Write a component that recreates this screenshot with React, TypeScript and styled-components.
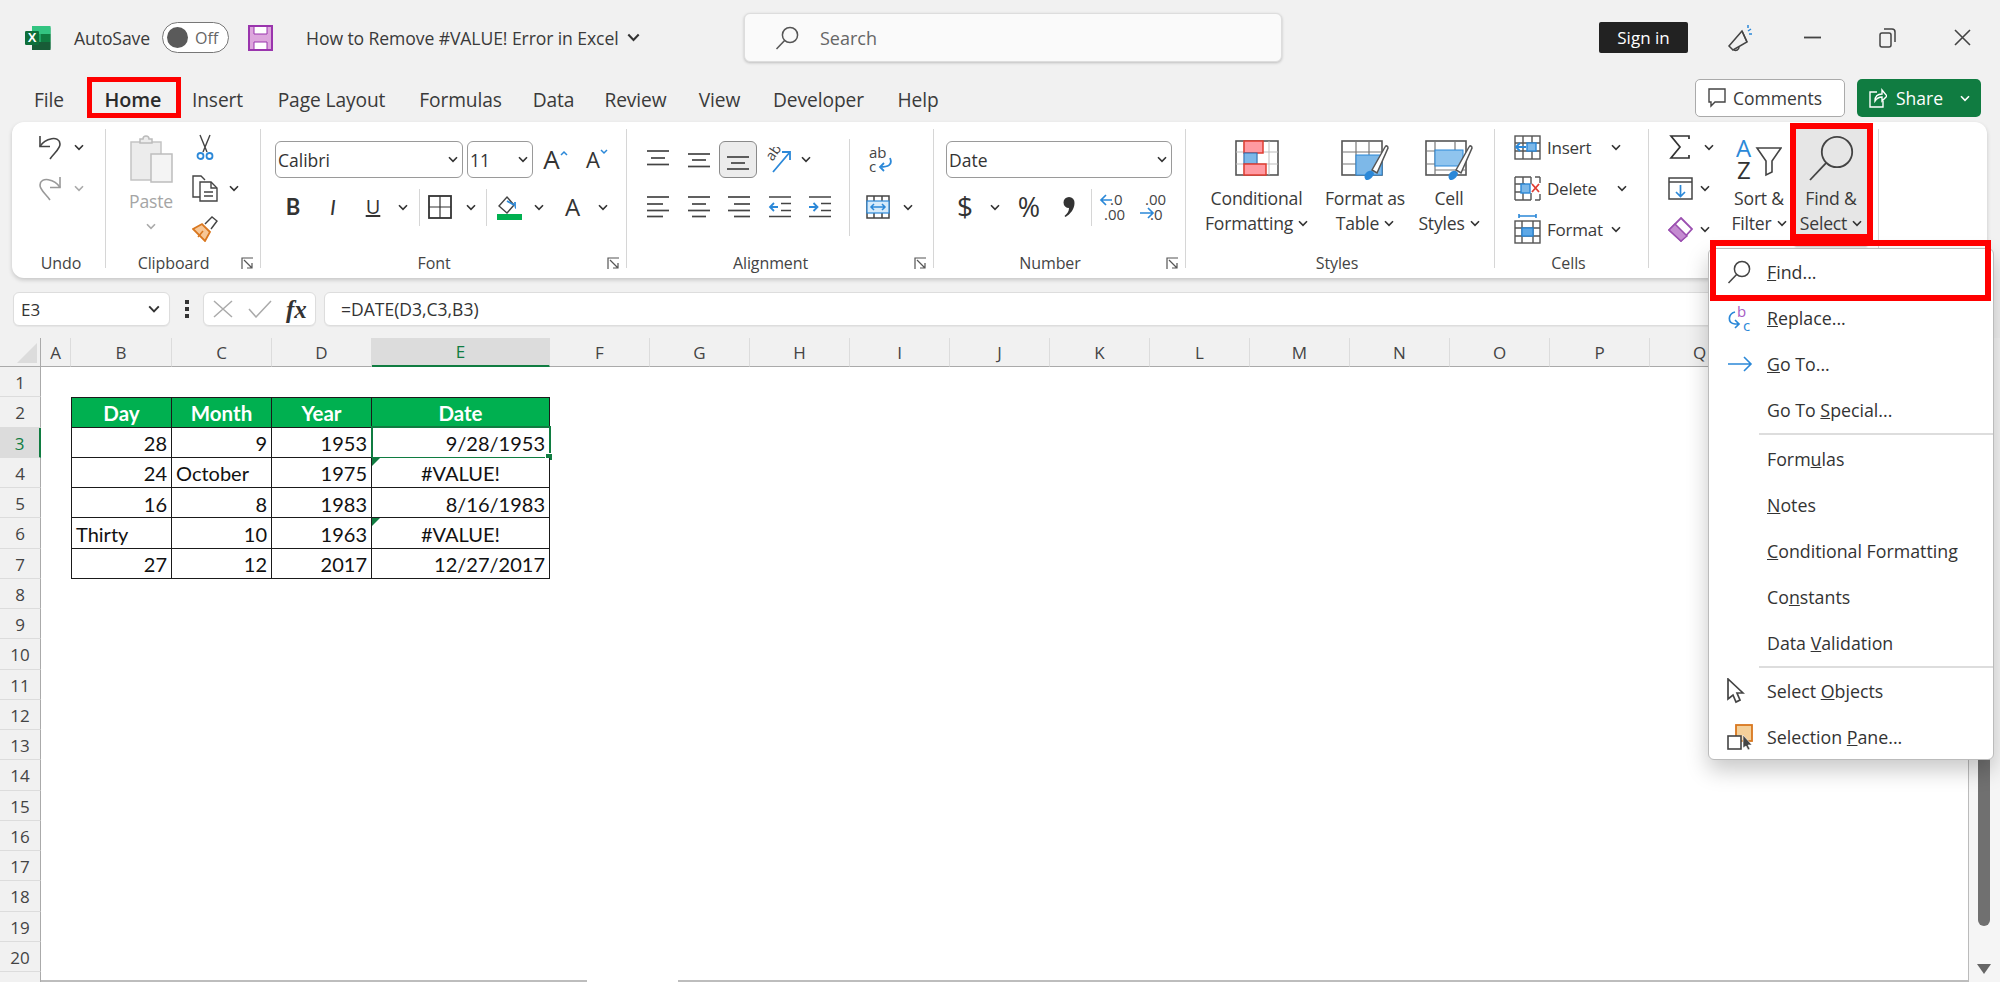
import React from "react";
import styled, { createGlobalStyle } from "styled-components";

const Global = createGlobalStyle`
  html, body { margin: 0; padding: 0; background: #fff; }
  * { box-sizing: border-box; }
  svg { display: block; flex: none; }
`;
const UI = `"Open Sans", "Noto Sans", sans-serif`;
const CELL = `Lato, "Liberation Sans", sans-serif`;

const Page = styled.div`
  position: relative; width: 2000px; height: 982px; overflow: hidden;
  background: #f1f1f1; color: #3a3a3a; font-family: ${UI};
  display: flex; flex-direction: column;
`;
const TitleBar = styled.div`height: 75px; display: flex; align-items: center; padding: 0 0 0 25px; flex: none;`;
const TitleText = styled.span<{ $l?: number }>`font-size: 17.6px; margin-left: ${p => p.$l ?? 0}px; letter-spacing: -0.1px; white-space: nowrap;`;
const Toggle = styled.div`
  margin-left: 12px; width: 67px; height: 31px; border: 1.5px solid #777; border-radius: 16px; background: #fff;
  display: flex; align-items: center; padding-left: 4px; gap: 7px; font-size: 16px; color: #666;
`;
const Knob = styled.span`width: 21px; height: 21px; border-radius: 50%; background: #5a5a5a;`;
const SearchBox = styled.div`
  position: absolute; left: 744px; top: 13px; width: 538px; height: 49px; background: #fafafa; border: 1px solid #ddd;
  border-radius: 6px; box-shadow: 0 1px 3px rgba(0,0,0,.22); display: flex; align-items: center; padding-left: 30px; gap: 21px;
  font-size: 18px; color: #666;
`;
const TitleRight = styled.div`margin-left: auto; display: flex; align-items: center; padding-right: 18px;`;
const SignIn = styled.div`
  width: 89px; height: 31px; background: #222; color: #fff; border-radius: 2px; font-size: 17px;
  display: flex; align-items: center; justify-content: center;
`;
const WinSlot = styled.div<{ $w: number }>`width: ${p => p.$w}px; display: flex; justify-content: center;`;

const TabRow = styled.div`height: 47px; display: flex; padding-left: 10px; flex: none;`;
const Tab = styled.div<{ $w: number; $on?: boolean }>`
  position: relative; width: ${p => p.$w}px; height: 47px; display: flex; align-items: center; justify-content: center; padding-top: 2px;
  font-size: ${p => (p.$on ? 19.8 : 19.2)}px; font-weight: ${p => (p.$on ? 600 : 400)}; color: ${p => (p.$on ? "#2b2b2b" : "#3a3a3a")};
  letter-spacing: -0.1px;
`;
const RedMark = styled.div<{ $l: number; $t: number; $w: number; $h: number; $b: number }>`
  position: absolute; left: ${p => p.$l}px; top: ${p => p.$t}px; width: ${p => p.$w}px; height: ${p => p.$h}px;
  border: ${p => p.$b}px solid #ff0000; pointer-events: none;
`;
const TabActions = styled.div`margin-left: auto; display: flex; gap: 12px; padding: 4px 19px 0 0;`;
const CommentsBtn = styled.div`
  width: 150px; height: 38px; background: #fff; border: 1px solid #aaa; border-radius: 5px; font-size: 17.5px;
  display: flex; align-items: center; padding-left: 12px; gap: 7px;
`;
const ShareBtn = styled.div`
  width: 124px; height: 38px; background: #107c41; color: #fff; border-radius: 5px; font-size: 17.5px;
  display: flex; align-items: center; padding-left: 12px; gap: 9px;
`;

const Ribbon = styled.div`
  margin-left: 12px; width: 1975px; height: 156px; background: #fff; border-radius: 12px;
  box-shadow: 0 2px 4px rgba(0,0,0,.18); display: flex; padding-top: 7px; flex: none;
`;
const Group = styled.div<{ $w: number; $plain?: boolean }>`
  width: ${p => p.$w}px; height: 139px; display: flex; flex-direction: column; position: relative; flex: none;
  border-right: ${p => (p.$plain ? "none" : "1px solid #d6d6d6")};
`;
const Body = styled.div<{ $col?: boolean; $pt?: number; $pl?: number; $gap?: number }>`
  flex: 1; display: flex; flex-direction: ${p => (p.$col ? "column" : "row")};
  padding: ${p => p.$pt ?? 0}px 0 0 ${p => p.$pl ?? 0}px; gap: ${p => p.$gap ?? 0}px; min-height: 0;
`;
const Foot = styled.div<{ $pl?: number }>`height: 22px; display: flex; align-items: center; margin-bottom: -6px; padding: 0 6px 0 ${p => p.$pl ?? 0}px; font-size: 16px; color: #444;`;
const FootLabel = styled.div`flex: 1; text-align: center; letter-spacing: -0.1px;`;
const Row = styled.div<{ $h?: number; $l?: number }>`
  display: flex; align-items: center; height: ${p => p.$h ?? 36}px; margin-left: ${p => p.$l ?? 0}px; flex: none;
`;
const Stack = styled.div<{ $w: number; $gap?: number }>`
  width: ${p => p.$w}px; display: flex; flex-direction: column; gap: ${p => p.$gap ?? 5}px; flex: none;
`;
const Slot = styled.div<{ $w: number; $on?: boolean; $h?: number; $ml?: number }>`
  width: ${p => p.$w}px; height: ${p => p.$h ? `${p.$h}px` : "auto"}; display: flex; align-items: center; justify-content: center; flex: none;
  margin-left: ${p => p.$ml ?? 0}px;
  ${p => p.$on ? "background:#ececec;border:1px solid #8a8a8a;border-radius:6px;" : ""}
`;
const VSep = styled.div<{ $h: number; $ml?: number; $mr?: number; $mt?: number }>`
  width: 1px; height: ${p => p.$h}px; background: #d6d6d6; margin: ${p => p.$mt ?? 0}px ${p => p.$mr ?? 0}px 0 ${p => p.$ml ?? 0}px; flex: none;
`;
const Combo = styled.div<{ $w: number; $ml?: number }>`
  width: ${p => p.$w}px; height: 37px; margin-left: ${p => p.$ml ?? 0}px; border: 1px solid #9a9a9a; border-radius: 6px; background: #fff;
  display: flex; align-items: center; justify-content: space-between; padding: 0 4px 0 2px; font-size: 17.5px; color: #333; flex: none;
`;
const BigBtn = styled.div<{ $w: number; $grey?: boolean }>`
  position: relative; width: ${p => p.$w}px; display: flex; flex-direction: column; align-items: center; flex: none;
  font-size: 17.6px; line-height: 25px; color: ${p => (p.$grey ? "#a5a5a5" : "#3a3a3a")}; letter-spacing: -0.2px;
`;
const IconBox = styled.div<{ $h: number }>`height: ${p => p.$h}px; display: flex; align-items: flex-end; justify-content: center; flex: none;`;
const BtnText = styled.span<{ $t: number }>`margin-top: ${p => p.$t}px; white-space: nowrap;`;
const BtnLine = styled.div`display: flex; align-items: center; gap: 5px; white-space: nowrap;`;
const FindWrap = styled.div`
  position: relative; width: 72px; height: 116px; background: #e6e6e6; box-shadow: 0 2px 2px rgba(0,0,0,.25);
  display: flex; flex-direction: column; align-items: center;
  font-size: 17.6px; line-height: 25px; letter-spacing: -0.2px; flex: none;
`;
const CellRow = styled.div`display: flex; align-items: center; height: 36px; font-size: 17px; letter-spacing: -0.25px;`;
const CellLabel = styled.span<{ $w: number }>`width: ${p => p.$w}px; margin-left: 6px; flex: none;`;
const GlyphB = styled.span<{ $b?: boolean; $i?: boolean; $u?: boolean; $s?: number }>`
  font-size: ${p => p.$s ?? 19}px; font-weight: ${p => (p.$b ? 700 : 400)}; font-style: ${p => (p.$i ? "italic" : "normal")};
  text-decoration: ${p => (p.$u ? "underline" : "none")}; line-height: 1.2; color: #333; font-family: ${p => (p.$i || p.$b ? CELL : UI)};
`;
const Caret = styled.svg<{ $ml?: number }>`margin-top: -14px; margin-left: ${p => p.$ml ?? 0}px;`;

const FormulaBar = styled.div`height: 60px; padding: 14px 12px 0 13px; display: flex; flex: none; align-items: flex-start;`;
const NameBox = styled.div`
  width: 157px; height: 34px; background: #fff; border: 1px solid #ddd; border-radius: 6px; display: flex; align-items: center;
  justify-content: space-between; padding: 0 9px 0 7px; font-size: 17px; color: #333; box-shadow: 0 1px 1px rgba(0,0,0,.05);
`;
const Dots = styled.div`width: 33px; display: flex; justify-content: center; height: 34px; align-items: center;`;
const FxBox = styled.div`
  width: 113px; height: 34px; background: #fff; border: 1px solid #ddd; border-radius: 6px; display: flex; align-items: center;
  padding-left: 9px; gap: 15px; box-shadow: 0 1px 1px rgba(0,0,0,.05);
`;
const FxText = styled.span`font-family: "Liberation Serif", serif; font-style: italic; font-weight: 700; font-size: 25px; line-height: 1; color: #333; margin-left: -1px;`;
const FormulaInput = styled.div`
  margin-left: 8px; flex: 1; height: 34px; background: #fff; border: 1px solid #ddd; border-radius: 6px; display: flex; align-items: center;
  padding-left: 16px; font-size: 17.5px; color: #333; box-shadow: 0 1px 1px rgba(0,0,0,.05);
`;

const SheetArea = styled.div`flex: 1; display: flex; min-height: 0; position: relative;`;
const SheetGrid = styled.div`
  flex: 1; display: grid; overflow: hidden; background: #fff; min-width: 0;
  grid-template-columns: 41px 30px 101px 100px 100px 178px repeat(15, 100px);
  grid-template-rows: 29px repeat(21, 30.25px);
  align-content: start; justify-content: start;
`;
const Corner = styled.div`
  background: #f1f1f1; border-bottom: 1.5px solid #aaa; border-right: 1.5px solid #aaa; position: relative;
  &::after { content: ""; position: absolute; right: 3px; bottom: 3px; border-style: solid; border-width: 0 0 20px 20px; border-color: transparent transparent #dcdcdc transparent; }
`;
const ColHead = styled.div<{ $on?: boolean }>`
  background: ${p => (p.$on ? "#dcdcdc" : "#f1f1f1")}; border-bottom: ${p => (p.$on ? "2px solid #107c41" : "1.5px solid #aaa")};
  border-right: 1px solid #dcdcdc; color: ${p => (p.$on ? "#107c41" : "#444")};
  display: flex; align-items: center; justify-content: center; font-size: 17px;
`;
const RowHead = styled.div<{ $on?: boolean }>`
  background: ${p => (p.$on ? "#dcdcdc" : "#f1f1f1")}; border-right: ${p => (p.$on ? "2px solid #107c41" : "1.5px solid #aaa")};
  border-bottom: 1px solid #dcdcdc; color: ${p => (p.$on ? "#107c41" : "#444")}; padding-top: 2px;
  display: flex; align-items: center; justify-content: center; font-size: 17px; grid-column: 1;
`;
const Empty = styled.div<{ $span?: number }>`grid-column: span ${p => p.$span ?? 1};`;
const DCell = styled.div<{ $head?: boolean; $a?: string; $first?: boolean; $top?: boolean; $err?: boolean }>`
  position: relative; display: flex; align-items: center;
  justify-content: ${p => (p.$a === "l" ? "flex-start" : p.$a === "c" ? "center" : "flex-end")};
  padding: 2px 4px 0; font-family: ${CELL}; font-size: ${p => (p.$head ? 20.5 : 20)}px; color: ${p => (p.$head ? "#fff" : "#111")}; font-weight: ${p => (p.$head ? 700 : 400)};
  background: ${p => (p.$head ? "#00b050" : "#fff")};
  border-right: 1.5px solid #1a1a1a; border-bottom: 1.5px solid #1a1a1a;
  ${p => (p.$first ? "border-left: 1.5px solid #1a1a1a;" : "")}
  ${p => (p.$top ? "border-top: 1.5px solid #1a1a1a;" : "")}
  ${p => p.$err ? `&::before { content:""; position:absolute; left:0; top:0; border-style:solid; border-width:8px 8px 0 0; border-color:#107c41 transparent transparent transparent; }` : ""}
`;
const SelBox = styled.div`
  position: absolute; left: -1px; top: -2px; right: -2px; bottom: -2px; border: 2px solid #107c41; pointer-events: none;
  &::after { content:""; position:absolute; right:-4px; bottom:-4px; width:6px; height:6px; background:#107c41; border:1px solid #fff; box-sizing: content-box; }
`;
const VScroll = styled.div`
  width: 32px; flex: none; background: #f5f5f5; border-left: 1.5px solid #bbb; position: relative;
  display: flex; flex-direction: column; align-items: center;
`;
const Thumb = styled.div`
  width: 12px; height: 588px; margin-left: -1px; background: #707070; border-radius: 0 0 6px 6px;
`;
const ScrollArrow = styled.div`
  margin-top: 38px; margin-left: -1px; width: 0; height: 0; border-style: solid; border-width: 10px 7px 0 7px; border-color: #666 transparent transparent transparent;
`;
const HScroll = styled.div`
  position: absolute; left: 41px; bottom: 0; height: 2px; width: 546px; background: #bdbdbd;
  &::after { content:""; position:absolute; left: 637px; width: 1290px; top:0; height:2px; background:#bdbdbd; }
`;

const Menu = styled.div`
  position: absolute; left: 1708px; top: 248px; width: 286px; height: 512px; background: #fff; border: 1.5px solid #bbb;
  border-radius: 6px; box-shadow: 0 10px 22px rgba(0,0,0,.22); font-size: 17.8px; color: #333;
`;
const MenuItem = styled.div`height: 46px; display: flex; align-items: center; white-space: nowrap;`;
const MenuIcon = styled.div`width: 58px; padding-left: 18px; display: flex; flex: none;`;
const MenuSep = styled.div<{ $h: number }>`height: ${p => p.$h}px; margin-left: 50px; border-top: 2px solid #ddd;`;

const Chev: React.FC<{ c?: string; w?: number }> = ({ c = "#333", w = 10 }) => (
  <svg width={w} height={w * 0.7} viewBox="0 0 10 7"><path d="M1 1.2 5 5.4 9 1.2" fill="none" stroke={c} strokeWidth="1.6" /></svg>
);
const Launcher = () => (
  <svg width="13" height="13" viewBox="0 0 13 13" fill="none" stroke="#555" strokeWidth="1.2"><path d="M1 12V1H12" /><path d="M3 3 11 11M11 6V11H6" /></svg>
);
const Lens: React.FC<{ s?: number; c?: string; sw?: number }> = ({ s = 24, c = "#444", sw = 1.5 }) => (
  <svg width={s} height={s} viewBox="0 0 24 24" fill="none" stroke={c} strokeWidth={sw}><circle cx="15" cy="9" r="7.6" /><path d="M9.6 14.4 1.5 23" /></svg>
);
const ExcelLogo = () => (
  <svg width="26" height="26" viewBox="0 0 26 26">
    <path d="M7 1.5h17a1.5 1.5 0 0 1 1.5 1.5v20a1.5 1.5 0 0 1-1.5 1.5H7z" fill="#21a366" />
    <rect x="7" y="1" width="9" height="8" fill="#33c481" /><rect x="16" y="1" width="9.5" height="8" fill="#33c481" />
    <rect x="16" y="9" width="9.5" height="8" fill="#107c41" /><rect x="7" y="17" width="18.5" height="8" fill="#185c37" />
    <rect x="0" y="6" width="14" height="14" rx="1.2" fill="#0e6f3a" />
    <text x="7" y="17.2" textAnchor="middle" fontFamily="Liberation Sans" fontWeight="700" fontSize="13" fill="#fff">X</text>
  </svg>
);
const SaveIcon = () => (
  <svg width="25" height="26" viewBox="0 0 25 26">
    <path d="M1 1h23v24H1z" fill="#dda6dd" stroke="#9a35ad" strokeWidth="2" />
    <rect x="6" y="2" width="13" height="7" fill="#fff" />
    <rect x="6" y="17" width="13" height="7" fill="#fff" />
    <path d="M6 2v7h13V2M6 24v-7h13v7" fill="none" stroke="#9a35ad" strokeWidth="1" />
  </svg>
);
const Megaphone = () => (
  <svg width="26" height="30" viewBox="0 0 26 30" fill="none" stroke="#444" strokeWidth="1.5">
    <path d="M15 8 2 23l4 4 14-8z" /><path d="M15 8l5 11" /><path d="M7 27c2 1 5 0 5-3" />
    <path d="M21 2v3M24 6l-3 2M25 11h-3" stroke="#2b88d8" />
  </svg>
);
const UndoSvg = styled.svg<{ $flip?: boolean }>`transform: ${p => (p.$flip ? "scaleX(-1)" : "none")};`;
const Undo: React.FC<{ c?: string; flip?: boolean }> = ({ c = "#444", flip }) => (
  <UndoSvg $flip={flip} width="24" height="26" viewBox="0 0 24 26" fill="none" stroke={c} strokeWidth="1.6">
    <path d="M2 2v10.5h10" /><path d="M2 12.5C7 4 21.5 1 22 10c.2 5-6 9-10 15" />
  </UndoSvg>
);
const PasteIcon = () => (
  <svg width="43" height="48" viewBox="0 0 43 48" fill="none">
    <path d="M1 7h30v38H1z" fill="#ececec" stroke="#c4c4c4" strokeWidth="1.5" />
    <path d="M10 8V4h3a3 3 0 0 1 6 0h3v4z" fill="#ececec" stroke="#bcbcbc" strokeWidth="1.5" />
    <rect x="21" y="19" width="21" height="28" fill="#f4f4f4" stroke="#bdbdbd" strokeWidth="1.5" />
  </svg>
);
const Scissors = () => (
  <svg width="18" height="27" viewBox="0 0 18 27" fill="none">
    <path d="M4 1l7 17M14 1 7 18" stroke="#444" strokeWidth="1.4" />
    <circle cx="4.5" cy="22" r="3" stroke="#2b88d8" strokeWidth="1.8" /><circle cx="13.5" cy="22" r="3" stroke="#2b88d8" strokeWidth="1.8" />
  </svg>
);
const CopyIcon = () => (
  <svg width="26" height="27" viewBox="0 0 26 27" fill="none" stroke="#444" strokeWidth="1.4">
    <path d="M9 22H1V1h8l4 4" /><path d="M8 7h11l6 6v13H8z" fill="#fff" /><path d="M19 7v6h6M12 17h9M12 21h9" />
  </svg>
);
const Painter = () => (
  <svg width="26" height="26" viewBox="0 0 26 26" fill="none">
    <path d="M1 13l9-5 8 8-5 9z" fill="#f7c797" stroke="#d9771f" strokeWidth="1.8" /><path d="M6 21l5-6" stroke="#d9771f" strokeWidth="1.5" />
    <path d="M13 8l7-7 5 4-6 8" fill="#fff" stroke="#444" strokeWidth="1.4" />
  </svg>
);
const Borders = () => (
  <svg width="24" height="24" viewBox="0 0 24 24" fill="none" stroke="#333" strokeWidth="1.8"><rect x="1" y="1" width="22" height="22" /><path d="M12 1v22M1 12h22" strokeWidth="1.2" /></svg>
);
const FillColor = () => (
  <svg width="26" height="26" viewBox="0 0 26 26" fill="none">
    <path d="M3 12 11 3l7 8-7 8z" stroke="#444" strokeWidth="1.4" fill="#fff" />
    <path d="M11 7l7 4M20 14c-1 0-1-4-1-6" stroke="#2b88d8" strokeWidth="1.8" />
    <rect x="1" y="20" width="25" height="6" fill="#00b050" />
  </svg>
);
const Lines: React.FC<{ rows: [number, number, number][]; c?: string }> = ({ rows, c = "#444" }) => (
  <svg width="24" height="24" viewBox="0 0 24 24" stroke={c} strokeWidth="1.7">
    {rows.map((r, i) => <path key={i} d={`M${r[0]} ${r[2]}H${r[1]}`} />)}
  </svg>
);
const TOP: [number, number, number][] = [[1, 23, 3], [5, 19, 10], [1, 23, 16.5]];
const MID: [number, number, number][] = [[1, 23, 6], [5, 19, 12], [1, 23, 18.5]];
const BOT: [number, number, number][] = [[1, 23, 9], [5, 19, 15], [1, 23, 21]];
const LEFT: [number, number, number][] = [[1, 23, 2], [1, 17, 9], [1, 23, 15.5], [1, 17, 21.5]];
const CENTER: [number, number, number][] = [[1, 23, 2], [5, 19, 9], [1, 23, 15.5], [5, 19, 21.5]];
const RIGHT: [number, number, number][] = [[1, 23, 2], [7, 23, 9], [1, 23, 15.5], [7, 23, 21.5]];
const Indent: React.FC<{ dir: "l" | "r" }> = ({ dir }) => (
  <svg width="24" height="24" viewBox="0 0 24 24" fill="none">
    <path d="M1 2h22M1 21.5h22" stroke="#444" strokeWidth="1.7" />
    <path d="M13 8.5H23M13 15.5H23" stroke="#444" strokeWidth="1.5" />
    <path d={dir === "l" ? "M10 12H2M6 8l-4 4 4 4" : "M1 12H9M5.5 8l4 4-4 4"} stroke="#2b88d8" strokeWidth="1.8" />
  </svg>
);
const Orient = () => (
  <svg width="28" height="26" viewBox="0 0 28 26" fill="none">
    <text x="6" y="14" fontFamily="Open Sans" fontSize="14" fill="#444" transform="rotate(-55 8 12)">ab</text>
    <path d="M9 25 26 5M18 5h8v8" stroke="#2b88d8" strokeWidth="1.8" />
  </svg>
);
const Wrap = () => (
  <svg width="24" height="28" viewBox="0 0 24 28" fill="none">
    <text x="0" y="12" fontFamily="Open Sans" fontSize="15" fill="#444">ab</text>
    <text x="0" y="26" fontFamily="Open Sans" fontSize="15" fill="#444">c</text>
    <path d="M21 12c3 7-2 9-10 9M15 17l-4 4 4 4" stroke="#2b88d8" strokeWidth="1.8" />
  </svg>
);
const Merge = () => (
  <svg width="24" height="24" viewBox="0 0 24 24" fill="none">
    <rect x="1" y="1" width="22" height="22" stroke="#444" strokeWidth="1.5" />
    <path d="M8 1v5M16 1v5M8 18v5M16 18v5" stroke="#444" strokeWidth="1.5" />
    <rect x="1" y="6" width="22" height="12" fill="#d7ebfa" stroke="#2b88d8" strokeWidth="1.2" />
    <path d="M5 12h14M8 9l-3 3 3 3M16 9l3 3-3 3" stroke="#2b88d8" strokeWidth="1.5" />
  </svg>
);
const Comma = () => (
  <svg width="14" height="24" viewBox="0 0 14 24"><path d="M7 2a5.5 5.5 0 0 1 5.5 6c0 6-4 11-9 14l-1-1c3-2.5 4.5-5 4.5-8a5.5 5.5 0 0 1 0-11z" fill="#333" /></svg>
);
const Dec: React.FC<{ inc?: boolean }> = ({ inc }) => (
  <svg width="28" height="30" viewBox="0 0 28 30" fill="none">
    <text x={inc ? 11 : 6} y="13" fontFamily="Open Sans" fontSize="15" fill="#444">{inc ? ".0" : ".00"}</text>
    <text x={inc ? 5 : 11} y="28" fontFamily="Open Sans" fontSize="15" fill="#444">{inc ? ".00" : ".0"}</text>
    {inc
      ? <path d="M13 8H2M7 3 2 8l5 5" stroke="#2b88d8" strokeWidth="1.7" />
      : <path d="M1 21h13M9 16l5 5-5 5" stroke="#2b88d8" strokeWidth="1.7" />}
  </svg>
);
const CondFmt = () => (
  <svg width="44" height="36" viewBox="0 0 44 36" fill="none">
    <rect x="1" y="1" width="42" height="34" fill="#fff" stroke="#555" strokeWidth="1.6" />
    <path d="M1 12h42M1 24h42M9 1v34M22 1v34M34 1v34" stroke="#bdbdbd" />
    <rect x="9" y="1" width="19" height="12" fill="#ff9aa2" stroke="#e03c31" strokeWidth="1.5" />
    <rect x="9" y="13" width="13" height="11" fill="#7db8e8" stroke="#2b6fb3" />
    <rect x="9" y="24" width="22" height="11" fill="#ff9aa2" stroke="#e03c31" strokeWidth="1.5" />
  </svg>
);
const Brush = () => (
  <g>
    <path d="M25 40c-3-3-1-8 3-9 3-1 5 1 5 3-2 4-4 6-8 6z" fill="#2b88d8" />
    <path d="M31 30 44 7c1-2 3-1 3 1L36 33z" fill="#fff" stroke="#555" strokeWidth="1.5" />
  </g>
);
const TableFmt = () => (
  <svg width="48" height="42" viewBox="0 0 48 42" fill="none">
    <rect x="1" y="1" width="40" height="34" fill="#fff" stroke="#555" strokeWidth="1.6" />
    <path d="M1 12h40M1 24h40M15 1v34M28 1v34" stroke="#777" strokeWidth="1.2" />
    <rect x="15" y="15" width="26" height="20" fill="#7db8e8" stroke="#2b88d8" />
    <Brush />
  </svg>
);
const CellSt = () => (
  <svg width="48" height="42" viewBox="0 0 48 42" fill="none">
    <rect x="1" y="1" width="40" height="34" fill="#fff" stroke="#555" strokeWidth="1.6" />
    <path d="M1 24h12M10 1v34M1 11h9M30 1v10M10 30h31" stroke="#777" strokeWidth="1.2" />
    <rect x="10" y="10" width="28" height="16" fill="#8fc4ee" stroke="#2b88d8" />
    <Brush />
  </svg>
);
const InsertCell = () => (
  <svg width="27" height="25" viewBox="0 0 27 25" fill="none" stroke="#555" strokeWidth="1.4">
    <rect x="1" y="1" width="25" height="23" /><path d="M1 8h25M1 16h25M9 1v23M18 1v23" />
    <rect x="13" y="8" width="9" height="8" fill="#7db8e8" stroke="#2b88d8" />
    <path d="M12 12H2M6 8l-4 4 4 4" stroke="#2b88d8" strokeWidth="1.8" />
  </svg>
);
const DeleteCell = () => (
  <svg width="27" height="25" viewBox="0 0 27 25" fill="none" stroke="#555" strokeWidth="1.4">
    <path d="M1 1h16M1 24h16M1 1v23M17 1v7M17 17v7M1 8h10M1 16h10M9 1v23M21 1h5M21 24h5M26 1v6M26 18v6" />
    <rect x="7" y="8" width="9" height="9" fill="#7db8e8" stroke="#2b88d8" />
    <path d="M18 8l7 8M25 8l-7 8" stroke="#e03c31" strokeWidth="1.8" />
  </svg>
);
const FormatCell = () => (
  <svg width="27" height="30" viewBox="0 0 27 30" fill="none" stroke="#555" strokeWidth="1.4">
    <path d="M5 2h17M5 0v4M22 0v4" stroke="#2b88d8" strokeWidth="1.6" />
    <rect x="1" y="7" width="25" height="22" /><path d="M1 14h25M1 22h25M8 7v22M19 7v22" />
    <rect x="8" y="14" width="11" height="8" fill="#5ea8e6" stroke="#2b88d8" />
  </svg>
);
const Sigma = () => (
  <svg width="22" height="24" viewBox="0 0 22 24" fill="none" stroke="#333" strokeWidth="1.7"><path d="M20 4V1H2l9 11-9 11h18v-3" /></svg>
);
const FillDown = () => (
  <svg width="25" height="23" viewBox="0 0 25 23" fill="none" stroke="#444" strokeWidth="1.5">
    <rect x="1" y="1" width="23" height="21" /><path d="M1 5h23" /><path d="M12.5 8v11M8 15l4.5 4.5L17 15" stroke="#2b88d8" strokeWidth="1.7" />
  </svg>
);
const Eraser = () => (
  <svg width="25" height="25" viewBox="0 0 25 25" fill="none">
    <path d="M13 1l11 11-11 12L1 13z" fill="#fff" stroke="#9b4fb0" strokeWidth="1.8" />
    <path d="M7 7l12 12-6 5L1 13z" fill="#c48bd1" stroke="#9b4fb0" strokeWidth="1.5" />
  </svg>
);
const SortIcon = () => (
  <svg width="46" height="44" viewBox="0 0 46 44" fill="none">
    <text x="0" y="21" fontFamily="Open Sans" fontSize="24" fill="#2b88d8">A</text>
    <text x="1" y="43" fontFamily="Open Sans" fontSize="24" fill="#333">Z</text>
    <path d="M21 12h24l-9 13v11l-6 3V25z" stroke="#444" strokeWidth="1.6" fill="#fff" />
  </svg>
);
const Speech = () => (
  <svg width="18" height="20" viewBox="0 0 18 20" fill="none" stroke="#444" strokeWidth="1.4"><path d="M1 1h16v13H7l-4 4v-4H1z" /></svg>
);
const ShareIc = () => (
  <svg width="18" height="20" viewBox="0 0 18 20" fill="none" stroke="#fff" strokeWidth="1.4"><path d="M8 4H1v15h13v-6" /><path d="M6 13c0-5 3-7 7-7V2l5 6-5 5V9c-3 0-5 1-7 4z" /></svg>
);
const Replace = () => (
  <svg width="26" height="28" viewBox="0 0 26 28" fill="none">
    <text x="10" y="13" fontFamily="Open Sans" fontSize="15" fill="#a65cc4">b</text>
    <text x="16" y="27" fontFamily="Open Sans" fontSize="15" fill="#2b88d8">c</text>
    <path d="M8 8C1 10 0 19 8 20h4M8 16l4 4-4 4" stroke="#2b88d8" strokeWidth="1.7" />
  </svg>
);
const Arrow = () => (
  <svg width="26" height="16" viewBox="0 0 26 16" fill="none" stroke="#2b88d8" strokeWidth="1.6"><path d="M1 8h23M17 1l7 7-7 7" /></svg>
);
const Cursor = () => (
  <svg width="18" height="26" viewBox="0 0 18 26"><path d="M1 1v20l5-4 3 7 4-2-3-7h6z" fill="#fff" stroke="#444" strokeWidth="1.7" /></svg>
);
const SelPane = () => (
  <svg width="26" height="26" viewBox="0 0 26 26" fill="none">
    <rect x="9" y="1" width="16" height="16" fill="#f4d09a" stroke="#d9771f" strokeWidth="1.8" />
    <rect x="1" y="12" width="13" height="13" fill="#fff" stroke="#444" strokeWidth="1.6" />
    <path d="M16 11v13l3-2 2 4 2-1-2-4h4z" fill="#444" stroke="#fff" strokeWidth=".6" />
  </svg>
);

const tabs: [string, number][] = [["File", 78], ["Home", 90], ["Insert", 79], ["Page Layout", 149], ["Formulas", 109], ["Data", 77], ["Review", 87], ["View", 81], ["Developer", 117], ["Help", 82]];
const cols: [string, boolean?][] = [["A"], ["B"], ["C"], ["D"], ["E", true], ["F"], ["G"], ["H"], ["I"], ["J"], ["K"], ["L"], ["M"], ["N"], ["O"], ["P"], ["Q"], ["R"], ["S"], ["T"]];
type D = { t: string; a?: string; sel?: boolean; err?: boolean };
const rowsData: D[][] = [
  [{ t: "28" }, { t: "9" }, { t: "1953" }, { t: "9/28/1953", sel: true }],
  [{ t: "24" }, { t: "October", a: "l" }, { t: "1975" }, { t: "#VALUE!", a: "c", err: true }],
  [{ t: "16" }, { t: "8" }, { t: "1983" }, { t: "8/16/1983" }],
  [{ t: "Thirty", a: "l" }, { t: "10" }, { t: "1963" }, { t: "#VALUE!", a: "c", err: true }],
  [{ t: "27" }, { t: "12" }, { t: "2017" }, { t: "12/27/2017" }],
];

export default function App() {
  const rows: React.ReactNode[] = [];
  for (let r = 1; r <= 21; r++) {
    rows.push(<RowHead key={`h${r}`} $on={r === 3}>{r <= 20 ? r : ""}</RowHead>);
    if (r === 2) {
      rows.push(<Empty key="a2" />);
      ["Day", "Month", "Year", "Date"].forEach((h, i) =>
        rows.push(<DCell key={h} $head $a="c" $top $first={i === 0}>{h}</DCell>));
      rows.push(<Empty key="f2" $span={15} />);
    } else if (r >= 3 && r <= 7) {
      rows.push(<Empty key={`a${r}`} />);
      rowsData[r - 3].forEach((c, i) =>
        rows.push(<DCell key={`${r}-${i}`} $a={c.a} $first={i === 0} $err={c.err}>{c.t}{c.sel && <SelBox />}</DCell>));
      rows.push(<Empty key={`f${r}`} $span={15} />);
    } else {
      rows.push(<Empty key={`e${r}`} $span={20} />);
    }
  }
  return (
    <Page>
      <Global />
      <TitleBar>
        <ExcelLogo />
        <TitleText $l={23}>AutoSave</TitleText>
        <Toggle><Knob />Off</Toggle>
        <Slot $w={63}><SaveIcon /></Slot>
        <TitleText $l={14}>How to Remove #VALUE! Error in Excel</TitleText>
        <Slot $w={30}><Chev w={13} /></Slot>
        <SearchBox><Lens s={24} c="#555" /><span>Search</span></SearchBox>
        <TitleRight>
          <SignIn>Sign in</SignIn>
          <WinSlot $w={104}><Megaphone /></WinSlot>
          <WinSlot $w={40}><svg width="17" height="3" viewBox="0 0 17 3"><path d="M0 1.5h17" stroke="#444" strokeWidth="1.8" /></svg></WinSlot>
          <WinSlot $w={110}>
            <svg width="17" height="20" viewBox="0 0 17 20" fill="none" stroke="#444" strokeWidth="1.5"><rect x="1" y="5" width="11" height="14" rx="2" /><path d="M5 1h8a3 3 0 0 1 3 3v10" /></svg>
          </WinSlot>
          <WinSlot $w={40}>
            <svg width="17" height="17" viewBox="0 0 17 17" stroke="#444" strokeWidth="1.6"><path d="M1 1l15 15M16 1 1 16" /></svg>
          </WinSlot>
        </TitleRight>
      </TitleBar>

      <TabRow>
        {tabs.map(([t, w]) => (
          <Tab key={t} $w={w} $on={t === "Home"}>{t}{t === "Home" && <RedMark $l={-1} $t={2} $w={94} $h={41} $b={5} />}</Tab>
        ))}
        <TabActions>
          <CommentsBtn><Speech />Comments</CommentsBtn>
          <ShareBtn><ShareIc />Share<Slot $w={22} $ml={2}><Chev c="#fff" /></Slot></ShareBtn>
        </TabActions>
      </TabRow>

      <Ribbon>
        <Group $w={94}>
          <Body $col $gap={5} $pl={26}>
            <Row><Undo /><Slot $w={34}><Chev /></Slot></Row>
            <Row><Undo c="#999" flip /><Slot $w={34}><Chev c="#aaa" /></Slot></Row>
          </Body>
          <Foot $pl={11}><FootLabel>Undo</FootLabel></Foot>
        </Group>

        <Group $w={155}>
          <Body $pl={11}>
            <BigBtn $w={68} $grey>
              <IconBox $h={54}><PasteIcon /></IconBox>
              <BtnText $t={6}>Paste</BtnText>
              <Slot $w={20} $h={24}><Chev c="#aaa" /></Slot>
            </BigBtn>
            <Stack $w={60}>
              <Row><Slot $w={40}><Scissors /></Slot></Row>
              <Row><Slot $w={40}><CopyIcon /></Slot><Slot $w={18}><Chev /></Slot></Row>
              <Row><Slot $w={40}><Painter /></Slot></Row>
            </Stack>
          </Body>
          <Foot><FootLabel>Clipboard</FootLabel><Launcher /></Foot>
        </Group>

        <Group $w={366}>
          <Body $col $pt={12} $gap={11}>
            <Row $h={37}>
              <Combo $w={188} $ml={14}>Calibri<Chev /></Combo>
              <Combo $w={66} $ml={4}>11<Chev /></Combo>
              <Slot $w={33} $ml={6}>
                <GlyphB $s={26}>A</GlyphB><Caret width="8" height="6" viewBox="0 0 8 6"><path d="M1 5l3-3 3 3" fill="none" stroke="#2b88d8" strokeWidth="1.5" /></Caret>
              </Slot>
              <Slot $w={38} $ml={6}>
                <GlyphB $s={22}>A</GlyphB><Caret width="8" height="6" viewBox="0 0 8 6"><path d="M1 1l3 3 3-3" fill="none" stroke="#2b88d8" strokeWidth="1.5" /></Caret>
              </Slot>
            </Row>
            <Row $l={12}>
              <Slot $w={40}><GlyphB $b $s={22}>B</GlyphB></Slot>
              <Slot $w={40}><GlyphB $i $s={22}>I</GlyphB></Slot>
              <Slot $w={40}><GlyphB $u $s={20}>U</GlyphB></Slot>
              <Slot $w={20}><Chev /></Slot>
              <VSep $h={37} $ml={6} $mr={4} />
              <Slot $w={32}><Borders /></Slot>
              <Slot $w={30}><Chev /></Slot>
              <VSep $h={37} />
              <Slot $w={44}><FillColor /></Slot>
              <Slot $w={16}><Chev /></Slot>
              <Slot $w={51}><GlyphB $s={24}>A</GlyphB></Slot>
              <Slot $w={10}><Chev /></Slot>
            </Row>
          </Body>
          <Foot><FootLabel>Font</FootLabel><Launcher /></Foot>
        </Group>

        <Group $w={307}>
          <Body $pt={12} $pl={10}>
            <Stack $w={212} $gap={11}>
              <Row $h={37}>
                <Slot $w={41}><Lines rows={TOP} /></Slot>
                <Slot $w={41}><Lines rows={MID} /></Slot>
                <Slot $w={38} $h={37} $on><Lines rows={BOT} /></Slot>
                <Slot $w={42}><Orient /></Slot>
                <Slot $w={14}><Chev /></Slot>
              </Row>
              <Row>
                <Slot $w={41}><Lines rows={LEFT} /></Slot>
                <Slot $w={41}><Lines rows={CENTER} /></Slot>
                <Slot $w={40}><Lines rows={RIGHT} /></Slot>
                <Slot $w={41}><Indent dir="l" /></Slot>
                <Slot $w={40}><Indent dir="r" /></Slot>
              </Row>
            </Stack>
            <VSep $h={97} $mt={-2} />
            <Stack $w={70} $gap={11}>
              <Row $h={37} $l={19}><Wrap /></Row>
              <Row $l={16}><Merge /><Slot $w={36}><Chev /></Slot></Row>
            </Stack>
          </Body>
          <Foot><FootLabel>Alignment</FootLabel><Launcher /></Foot>
        </Group>

        <Group $w={252}>
          <Body $col $pt={12} $gap={11}>
            <Row $h={37}><Combo $w={226} $ml={12}>Date<Chev /></Combo></Row>
            <Row $l={12}>
              <Slot $w={38}><GlyphB $s={28}>$</GlyphB></Slot>
              <Slot $w={22}><Chev /></Slot>
              <Slot $w={46}><GlyphB $s={27}>%</GlyphB></Slot>
              <Slot $w={34}><Comma /></Slot>
              <VSep $h={37} $ml={5} $mr={7} />
              <Slot $w={28}><Dec inc /></Slot>
              <Slot $w={12} />
              <Slot $w={28}><Dec /></Slot>
            </Row>
          </Body>
          <Foot><FootLabel>Number</FootLabel><Launcher /></Foot>
        </Group>

        <Group $w={309}>
          <Body $pl={12}>
            <BigBtn $w={117}>
              <IconBox $h={47}><CondFmt /></IconBox>
              <BtnText $t={10}>Conditional</BtnText>
              <BtnLine>Formatting <Chev /></BtnLine>
            </BigBtn>
            <BigBtn $w={100}>
              <IconBox $h={53}><TableFmt /></IconBox>
              <BtnText $t={4}>Format as</BtnText>
              <BtnLine>Table <Chev /></BtnLine>
            </BigBtn>
            <BigBtn $w={68}>
              <IconBox $h={53}><CellSt /></IconBox>
              <BtnText $t={4}>Cell</BtnText>
              <BtnLine>Styles <Chev /></BtnLine>
            </BigBtn>
          </Body>
          <Foot><FootLabel>Styles</FootLabel></Foot>
        </Group>

        <Group $w={154}>
          <Body $col $gap={5} $pl={19}>
            <CellRow><InsertCell /><CellLabel $w={64}>Insert</CellLabel><Chev /></CellRow>
            <CellRow><DeleteCell /><CellLabel $w={70}>Delete</CellLabel><Chev /></CellRow>
            <CellRow><FormatCell /><CellLabel $w={64}>Format</CellLabel><Chev /></CellRow>
          </Body>
          <Foot><FootLabel>Cells</FootLabel></Foot>
        </Group>

        <Group $w={230}>
          <Body $pl={19}>
            <Stack $w={55}>
              <Row><Slot $w={24}><Sigma /></Slot><Slot $w={34}><Chev /></Slot></Row>
              <Row><Slot $w={24}><FillDown /></Slot><Slot $w={26}><Chev /></Slot></Row>
              <Row><Slot $w={24}><Eraser /></Slot><Slot $w={26}><Chev /></Slot></Row>
            </Stack>
            <BigBtn $w={72}>
              <IconBox $h={51}><SortIcon /></IconBox>
              <BtnText $t={6}>Sort &amp;</BtnText>
              <BtnLine>Filter <Chev /></BtnLine>
            </BigBtn>
            <FindWrap>
              <IconBox $h={53}><Lens s={48} c="#444" sw={0.9} /></IconBox>
              <BtnText $t={4}>Find &amp;</BtnText>
              <BtnLine>Select <Chev /></BtnLine>
              <RedMark $l={-5} $t={-6} $w={83} $h={117} $b={6} />
            </FindWrap>
          </Body>
        </Group>
      </Ribbon>

      <FormulaBar>
        <NameBox>E3<Chev w={12} /></NameBox>
        <Dots>
          <svg width="4" height="18" viewBox="0 0 4 18" fill="#333"><rect y="0" width="4" height="4" /><rect y="7" width="4" height="4" /><rect y="14" width="4" height="4" /></svg>
        </Dots>
        <FxBox>
          <svg width="20" height="18" viewBox="0 0 20 18" stroke="#aaa" strokeWidth="1.5"><path d="M1 1l18 16M19 1 1 17" /></svg>
          <svg width="24" height="18" viewBox="0 0 24 18" fill="none" stroke="#aaa" strokeWidth="1.5"><path d="M1 9l7 8L23 1" /></svg>
          <FxText>fx</FxText>
        </FxBox>
        <FormulaInput>=DATE(D3,C3,B3)</FormulaInput>
      </FormulaBar>

      <SheetArea>
        <SheetGrid>
          <Corner />
          {cols.map(([c, on]) => <ColHead key={c} $on={on}>{c}</ColHead>)}
          {rows}
        </SheetGrid>
        <VScroll>
          <Thumb />
          <ScrollArrow />
        </VScroll>
        <HScroll />
      </SheetArea>

      <Menu>
        <RedMark $l={0.5} $t={-9.5} $w={281} $h={61} $b={6} />
        <MenuItem><MenuIcon><Lens s={24} /></MenuIcon><span><u>F</u>ind...</span></MenuItem>
        <MenuItem><MenuIcon><Replace /></MenuIcon><span><u>R</u>eplace...</span></MenuItem>
        <MenuItem><MenuIcon><Arrow /></MenuIcon><span><u>G</u>o To...</span></MenuItem>
        <MenuItem><MenuIcon /><span>Go To <u>S</u>pecial...</span></MenuItem>
        <MenuSep $h={3} />
        <MenuItem><MenuIcon /><span>Form<u>u</u>las</span></MenuItem>
        <MenuItem><MenuIcon /><span><u>N</u>otes</span></MenuItem>
        <MenuItem><MenuIcon /><span><u>C</u>onditional Formatting</span></MenuItem>
        <MenuItem><MenuIcon /><span>Co<u>n</u>stants</span></MenuItem>
        <MenuItem><MenuIcon /><span>Data <u>V</u>alidation</span></MenuItem>
        <MenuSep $h={2} />
        <MenuItem><MenuIcon><Cursor /></MenuIcon><span>Select <u>O</u>bjects</span></MenuItem>
        <MenuItem><MenuIcon><SelPane /></MenuIcon><span>Selection <u>P</u>ane...</span></MenuItem>
      </Menu>
    </Page>
  );
}
